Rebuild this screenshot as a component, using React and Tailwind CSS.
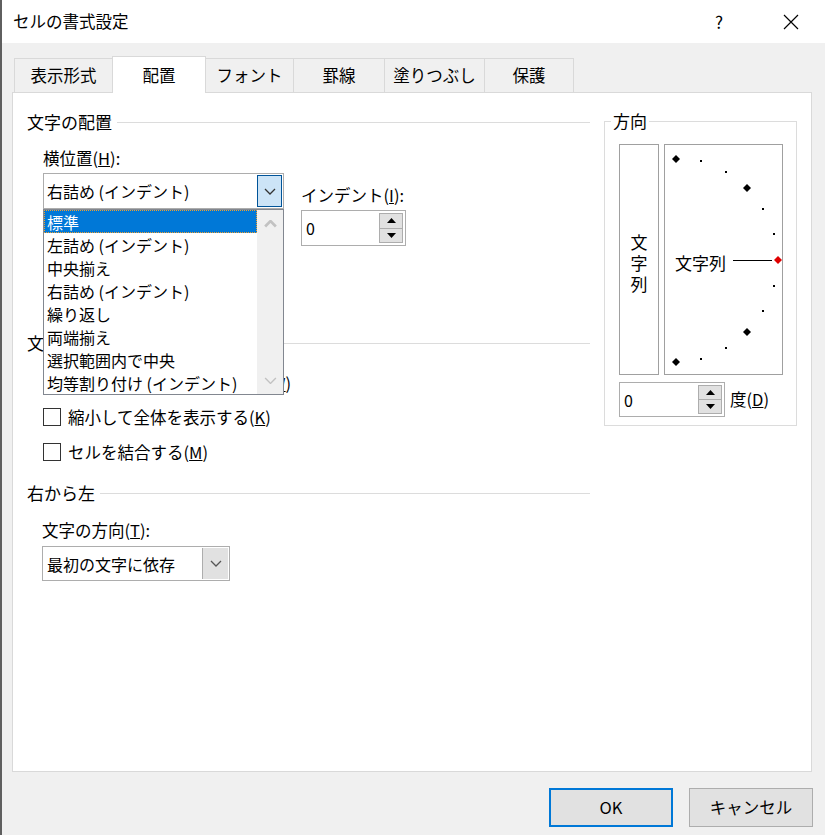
import React from "react";

const font = { fontFamily: '"Noto Sans CJK JP", "Noto Sans", sans-serif' };

function SectionHeader({ label, className = "" }) {
  return (
    <div className={`flex items-center h-[20px] ${className}`}>
      <span className="text-[17px] leading-[20px] whitespace-nowrap">{label}</span>
      <div className="flex-1 h-px bg-[#dcdcdc] ml-[5px]" />
    </div>
  );
}

function Checkbox({ children, className = "" }) {
  return (
    <div className={`flex items-center h-[20px] ${className}`}>
      <div className="w-[18px] h-[18px] border border-[#333] bg-white shrink-0" />
      <span className="ml-[7px] text-[16.5px] leading-[20px] whitespace-nowrap">{children}</span>
    </div>
  );
}

function Spin({ value, className = "" }) {
  return (
    <div className={`flex items-center border border-[#adadad] bg-white ${className}`}>
      <span className="flex-1 pl-[4px] text-[16px]">{value}</span>
      <div className="flex flex-col w-[24px] h-[calc(100%-4px)] mr-[2px] border border-[#adadad] bg-[#e1e1e1]">
        <div className="flex-1 flex items-center justify-center border-b border-[#adadad]">
          <svg width="9" height="5" viewBox="0 0 9 5"><path d="M0 5 L4.5 0 L9 5 Z" fill="#000" /></svg>
        </div>
        <div className="flex-1 flex items-center justify-center">
          <svg width="9" height="5" viewBox="0 0 9 5"><path d="M0 0 L4.5 5 L9 0 Z" fill="#000" /></svg>
        </div>
      </div>
    </div>
  );
}

function Chevron({ up = false, color = "#333", w = 12 }) {
  return (
    <svg width={w} height={w / 2 + 1} viewBox="0 0 12 7">
      <path d={up ? "M1 6 L6 1 L11 6" : "M1 1 L6 6 L11 1"} stroke={color} strokeWidth={up ? 2.5 : 1.3} fill="none" />
    </svg>
  );
}

const items = [
  "標準",
  "左詰め (インデント)",
  "中央揃え",
  "右詰め (インデント)",
  "繰り返し",
  "両端揃え",
  "選択範囲内で中央",
  "均等割り付け (インデント)",
];

function Dial() {
  const big = [
    [12, 15],
    [83, 44],
    [83, 188],
    [12, 218],
  ];
  const dots = [
    [37, 17],
    [62, 28],
    [99, 65],
    [110, 90],
    [110, 142],
    [99, 167],
    [62, 204],
    [37, 215],
  ];
  const dia = (x, y, c, k) => (
    <path key={k} d={`M${x} ${y - 4} L${x + 4} ${y} L${x} ${y + 4} L${x - 4} ${y} Z`} fill={c} />
  );
  return (
    <div className="relative w-[119px] h-[231px] ml-[5px] border border-[#a0a0a0] bg-white">
      <svg className="absolute left-0 top-0" width="117" height="229" viewBox="1 1 117 229">
        {big.map(([x, y], i) => dia(x, y, "#000", i))}
        {dia(114, 116, "#e00000", "r")}
        {dots.map(([x, y], i) => (
          <rect key={"d" + i} x={x - 1} y={y - 1} width="2" height="2" fill="#000" />
        ))}
        <line x1="69" y1="116.5" x2="108" y2="116.5" stroke="#000" strokeWidth="1" />
      </svg>
      <span className="absolute left-[10px] top-[107px] text-[17px] leading-[22px]">文字列</span>
    </div>
  );
}

export default function App() {
  return (
    <div style={font} className="w-[825px] h-[835px] flex flex-col border-l-2 border-[#5f5f5f] text-black overflow-hidden">
      {/* title bar */}
      <div className="h-[43px] bg-white flex items-center shrink-0">
        <span className="ml-[11px] text-[16.5px]">セルの書式設定</span>
        <span className="ml-auto text-[17px] mr-[60px]">?</span>
        <svg className="mr-[26px]" width="16" height="16" viewBox="0 0 16 16">
          <path d="M1 1 L15 15 M15 1 L1 15" stroke="#000" strokeWidth="1.2" />
        </svg>
      </div>

      <div className="flex-1 bg-[#f0f0f0] flex flex-col pl-[10px]">
        {/* tabs */}
        <div className="flex items-end mt-[13px] h-[36px] pl-[2px] text-[16.5px]">
          {["表示形式", "配置", "フォント", "罫線", "塗りつぶし", "保護"].map((t, i) => {
            const widths = ["w-[99px]", "w-[94px]", "w-[89px]", "w-[92px]", "w-[101px]", "w-[90px]"];
            const sel = i === 1;
            return (
              <div
                key={t}
                className={`${widths[i]} flex items-center justify-center border-t border-l border-r -mr-px ${
                  sel
                    ? "h-[37px] bg-white border-[#d9d9d9] relative z-10 -mb-px"
                    : "h-[34px] bg-[#f0f0f0] border-[#d9d9d9]"
                }`}
              >
                {t}
              </div>
            );
          })}
        </div>

        {/* panel */}
        <div className="w-[800px] h-[680px] bg-white border border-[#d9d9d9] flex">
          {/* left column */}
          <div className="w-[577px] pl-[14px] flex flex-col">
            <SectionHeader label="文字の配置" className="mt-[19px]" />
            <div className="pl-[16px] flex">
              <div className="w-[241px] flex flex-col">
                <div className="mt-[16px] h-[20px] text-[16.5px] leading-[20px]">
                  横位置(<span className="underline">H</span>):
                </div>
                <div className="relative mt-[5px] h-[36px] border border-[#adadad] bg-white flex items-center">
                  <span className="pl-[3px] flex-1 text-[16px]">右詰め (インデント)</span>
                  <div className="w-[25px] h-[32px] mr-[1px] bg-[#cce4f7] border border-[#005499] flex items-center justify-center">
                    <Chevron />
                  </div>
                  {/* open list */}
                  <div className="absolute left-[-1px] top-[35px] w-[241px] h-[186px] bg-white border border-[#828790] flex z-20">
                    <div className="flex-1 flex flex-col">
                      {items.map((it, i) => (
                        <div
                          key={i}
                          className={`h-[23px] flex items-center pl-[3px] text-[16px] whitespace-nowrap ${
                            i === 0 ? "bg-[#0078d7] text-white outline-1 outline-dotted outline-[#f0a030] -outline-offset-1" : ""
                          }`}
                        >
                          {it}
                        </div>
                      ))}
                    </div>
                    <div className="w-[26px] bg-[#f0f0f0] flex flex-col items-center justify-between py-[10px]">
                      <Chevron up color="#c2c2c2" w={13} />
                      <Chevron color="#c2c2c2" w={13} />
                    </div>
                  </div>
                </div>
                {/* space under the open list (縦位置 controls are covered) */}
                <div className="h-[104px]" />
              </div>
              <div className="ml-[17px] flex flex-col">
                <div className="mt-[53px] h-[20px] text-[16.5px] leading-[20px]">
                  インデント(<span className="underline">I</span>):
                </div>
                <Spin value="0" className="mt-[5px] w-[105px] h-[36px]" />
              </div>
            </div>

            <SectionHeader label="文字の制御" className="mt-[20px]" />
            <div className="pl-[16px] flex flex-col">
              <Checkbox className="mt-[20px]">
                折り返して全体を表示する(<span className="underline">W</span>)
              </Checkbox>
              <Checkbox className="mt-[14px]">
                縮小して全体を表示する(<span className="underline">K</span>)
              </Checkbox>
              <Checkbox className="mt-[15px]">
                セルを結合する(<span className="underline">M</span>)
              </Checkbox>
            </div>

            <SectionHeader label="右から左" className="mt-[21px]" />
            <div className="pl-[15px] flex flex-col">
              <div className="mt-[17px] h-[20px] text-[16.5px] leading-[20px]">
                文字の方向(<span className="underline">T</span>):
              </div>
              <div className="mt-[6px] w-[188px] h-[35px] border border-[#adadad] bg-white flex items-center">
                <span className="pl-[4px] flex-1 text-[16px]">最初の文字に依存</span>
                <div className="w-[26px] h-[31px] mr-[1px] bg-[#e1e1e1] border-l border-[#adadad] flex items-center justify-center">
                  <Chevron color="#555" />
                </div>
              </div>
            </div>
          </div>

          {/* right group: 方向 */}
          <div className="ml-[14px] mt-[28px] w-[193px] h-[305px] relative border border-[#dcdcdc] flex flex-col pl-[14px]">
            <span className="absolute left-[6px] top-[-11px] bg-white px-[2px] text-[17px] leading-[20px]">方向</span>
            <div className="flex mt-[22px]">
              <div className="w-[40px] h-[231px] border border-[#a0a0a0] flex flex-col items-center justify-center text-[17px] leading-[21px] pt-[5px]">
                <span>文</span>
                <span>字</span>
                <span>列</span>
              </div>
              <Dial />
            </div>
            <div className="flex items-center mt-[7px]">
              <Spin value="0" className="w-[106px] h-[35px]" />
              <span className="ml-[5px] text-[16.5px]">
                度(<span className="underline">D</span>)
              </span>
            </div>
          </div>
        </div>

        {/* buttons */}
        <div className="flex justify-end mt-[16px] pr-[12px] gap-[16px] text-[16.5px]">
          <div className="w-[124px] h-[39px] bg-[#e1e1e1] border-2 border-[#0078d7] flex items-center justify-center">OK</div>
          <div className="w-[124px] h-[39px] bg-[#e1e1e1] border border-[#adadad] flex items-center justify-center">キャンセル</div>
        </div>
      </div>
    </div>
  );
}
